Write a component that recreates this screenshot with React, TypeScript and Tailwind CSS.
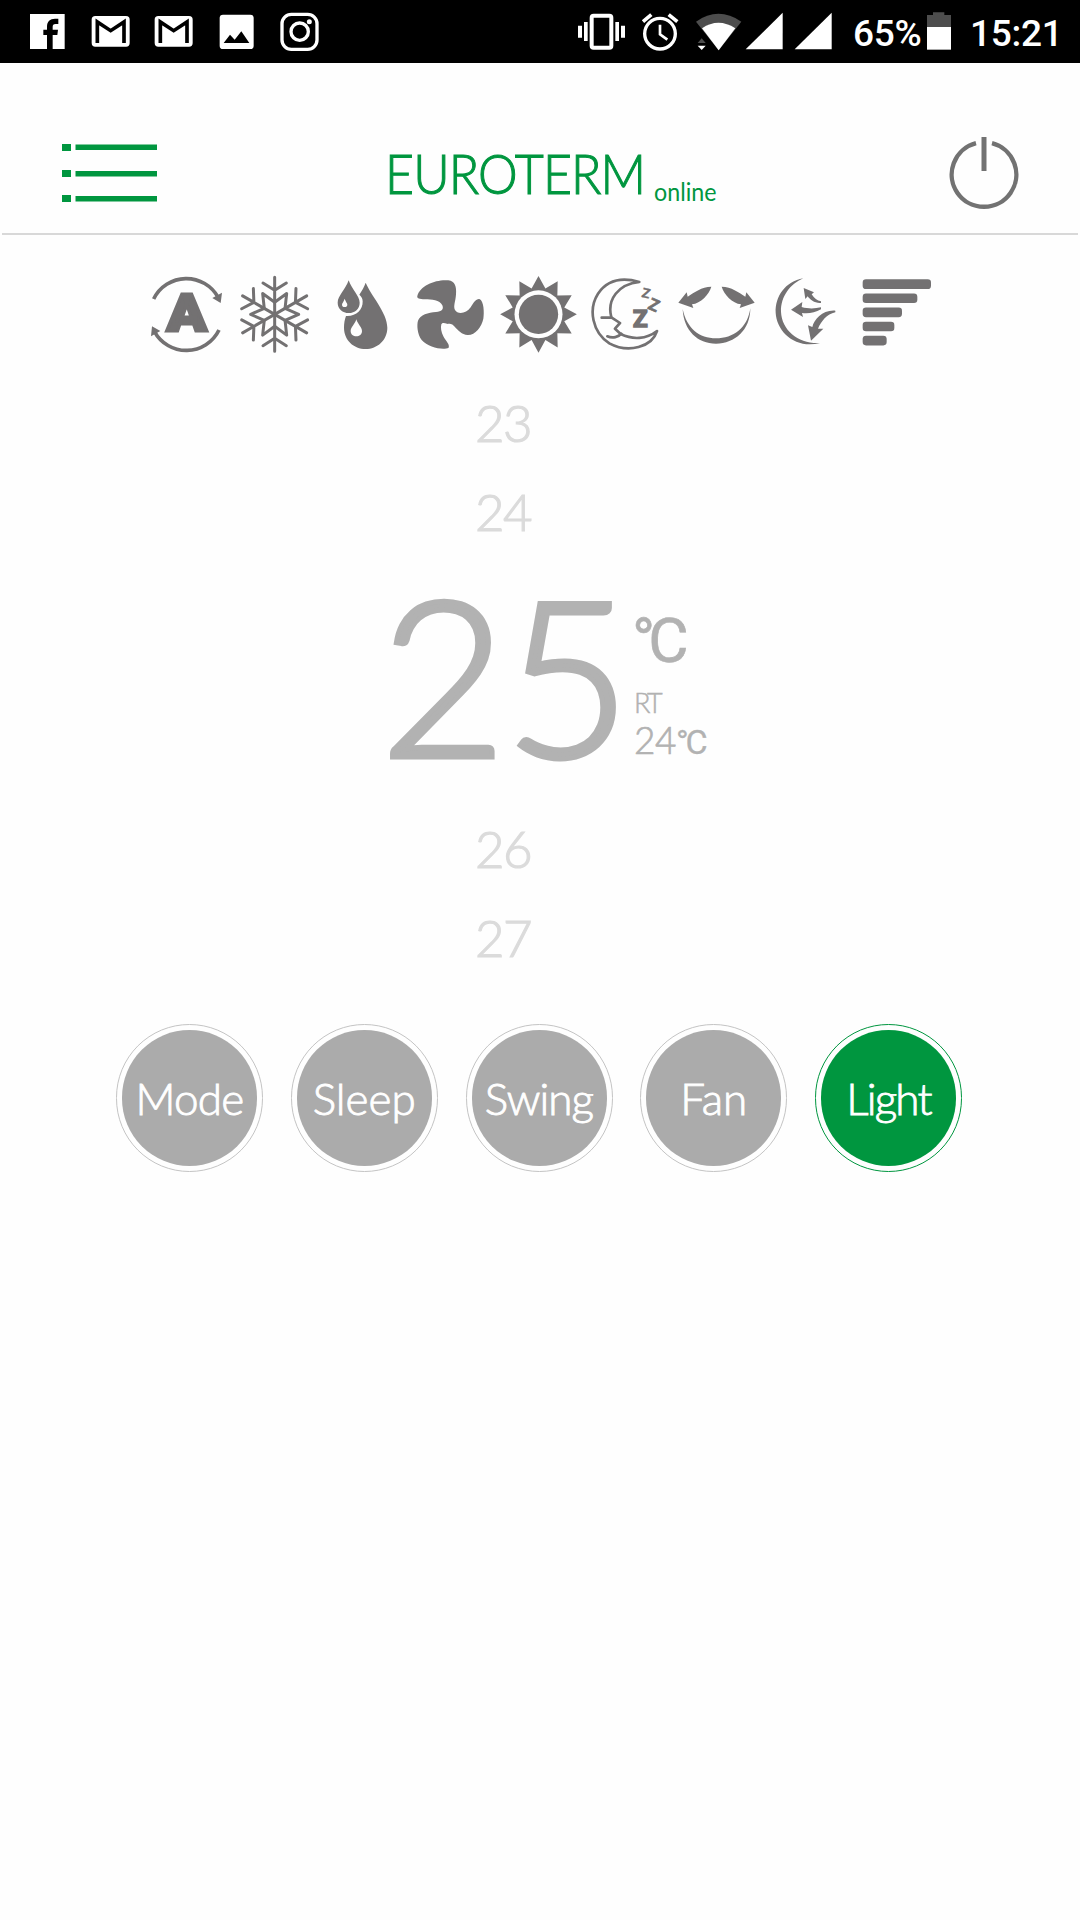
import { useState, type ReactNode } from "react";
import clsx from "clsx";

const MODES = [
  { label: "Mode", tracking: "tracking-[-0.7px]" },
  { label: "Sleep", tracking: "tracking-normal" },
  { label: "Swing", tracking: "tracking-[-0.9px]" },
  { label: "Fan", tracking: "tracking-normal" },
  { label: "Light", tracking: "tracking-[-1.8px]" },
];

/* ---------- Status bar ---------- */

function StatusIcon({
  x,
  width,
  className,
  children,
}: {
  x: number;
  width: number;
  className: string;
  children: ReactNode;
}) {
  return (
    <svg
      viewBox={`${x} 0 ${width} 189`}
      className={clsx("h-[63px] shrink-0", className)}
      fill="#fff"
    >
      {children}
    </svg>
  );
}

function GmailIcon() {
  return (
    <StatusIcon x={237} width={189} className="w-[63px]">
      <rect x="275" y="48" width="114" height="92" rx="11" />
      <path
        d="M292 129V66L332 92L372 66V129"
        fill="none"
        stroke="#000"
        strokeWidth="11"
      />
    </StatusIcon>
  );
}

function SignalIcon({ className }: { className: string }) {
  return (
    <StatusIcon x={552} width={144} className={className}>
      <path d="M557 148L668 38V148Z" />
    </StatusIcon>
  );
}

function StatusBar() {
  return (
    <div className="flex h-[63px] items-start bg-black pl-4 font-['Roboto',sans-serif] text-[37px] font-medium leading-[67px] text-white">
      <StatusIcon x={48} width={189} className="w-[63px]">
        <rect x="90" y="42" width="104" height="105" />
        <path
          d="M141 147V105H130V89H141V80C141 64 150 56 165 56H175V72H167C160 72 158 75 158 81V89H174L172 105H158V147Z"
          fill="#000"
        />
      </StatusIcon>
      <GmailIcon />
      <GmailIcon />
      <StatusIcon x={615} width={189} className="w-[63px]">
        <rect x="659" y="44" width="102" height="103" rx="10" />
        <path d="M671 129L690 104L704 119L724 94L748 129Z" fill="#000" />
      </StatusIcon>
      <StatusIcon x={804} width={189} className="w-[63px]">
        <g fill="none" stroke="#fff" strokeWidth="10">
          <rect x="846" y="43" width="105" height="105" rx="28" />
          <circle cx="899" cy="95" r="26" />
        </g>
        <circle cx="928" cy="65" r="7.5" />
      </StatusIcon>

      <StatusIcon x={30} width={186} className="ml-[239px] w-[62px]">
        <rect
          x="95"
          y="47"
          width="59"
          height="96"
          rx="6"
          fill="none"
          stroke="#fff"
          strokeWidth="12"
        />
        <path d="M54 77h12v36H54zM72 66h11v57H72zM166 66h11v57h-11zM183 77h12v36h-12z" />
      </StatusIcon>
      <StatusIcon x={216} width={174} className="w-[58px]">
        <g fill="none" stroke="#fff" strokeWidth="10">
          <circle cx="300" cy="101" r="46" />
          <path d="M300 74V103L322 119" strokeWidth="8" />
          <path d="M249 65L274 44M326 44L352 65" strokeWidth="11" />
        </g>
      </StatusIcon>
      <StatusIcon x={390} width={162} className="w-[54px]">
        <path d="M408 65Q475 18 544 65L476 151Z" fill="#4d4d4d" />
        <path d="M426 85Q475 52 526 85L476 151Z" />
        <path d="M413 129L425 115L437 129Z" fill="#4d4d4d" />
        <path d="M413 137H437L425 150Z" />
      </StatusIcon>
      <SignalIcon className="w-[48px]" />
      <SignalIcon className="ml-px w-[48px]" />
      <span className="ml-[12px] w-[72px] tracking-[-0.3px]">65%</span>
      <StatusIcon x={1095} width={84} className="w-[28px]">
        <path d="M1101 45H1119V37H1153V45H1173V82H1101Z" fill="#4d4d4d" />
        <path d="M1101 81H1173V149H1101Z" />
      </StatusIcon>
      <span className="ml-[17px] tracking-[-0.3px]">15:21</span>
    </div>
  );
}

/* ---------- Header ---------- */

function Logo() {
  return (
    <h1 className="flex w-[344px] items-baseline whitespace-nowrap pl-[5px] font-['Lato',sans-serif] leading-[75px] text-[#00963f]">
      <span className="w-[260px] shrink-0">
        <span className="inline-block origin-left scale-x-[0.895] text-[56px] font-light tracking-[-1px] [-webkit-text-stroke:1.1px_#00963f]">
          EUROTERM
        </span>
      </span>
      <span className="ml-[9px] inline-block origin-left translate-y-[7px] scale-x-[0.93] text-[25px]">
        online
      </span>
    </h1>
  );
}

function Header({ on, onPower }: { on: boolean; onPower: () => void }) {
  return (
    <header className="mx-[2px] flex h-[172px] items-start justify-between border-b-2 border-[#d8d8d8] pl-[58px] pr-[54px] pt-[72px]">
      <button type="button" aria-label="Menu">
        <svg viewBox="0 0 100 70" className="h-[70px] w-[100px]" fill="#00963f">
          <path d="M2 9h9v7H2zM2 35h9v7H2zM2 60h9v7H2z" />
          <path d="M15.5 9.5H97V15H15.5zM15.5 36H97v5.5H15.5zM15.5 61H97v5.5H15.5z" />
        </svg>
      </button>

      <Logo />

      <button type="button" aria-label={on ? "Turn off" : "Turn on"} onClick={onPower}>
        <svg
          viewBox="944 135 80 80"
          className="h-20 w-20"
          fill="none"
          stroke="#727272"
        >
          <path d="M976 143.2A32.3 32.3 0 1 0 992 143.2" strokeWidth="4.4" />
          <path d="M984 137V171" strokeWidth="5" />
        </svg>
      </button>
    </header>
  );
}

/* ---------- Feature icons ---------- */

function FeatureIcon({ x, children }: { x: number; children: ReactNode }) {
  return (
    <svg viewBox={`${x} 42 264 240`} className="h-20 w-[88px]" fill="#737172">
      {children}
    </svg>
  );
}

function polar(cx: number, cy: number, r: number, deg: number) {
  const a = (deg * Math.PI) / 180;
  return `${(cx + r * Math.cos(a)).toFixed(1)},${(cy + r * Math.sin(a)).toFixed(1)}`;
}

// star polygon, alternating between the tip and the valley radius
function star(cx: number, cy: number, tips: number, outer: number, inner: number) {
  return Array.from({ length: tips * 2 }, (_, i) =>
    polar(cx, cy, i % 2 ? inner : outer, (i * 180) / tips)
  ).join(" ");
}

function SwingArrow() {
  return (
    <path d="M154 80C124 80 104 97 83 110L80 97L55 128L100 144L96 133C122 130 147 104 154 80Z" />
  );
}

function FeatureIcons() {
  return (
    <div className="flex justify-center">
      {/* auto */}
      <FeatureIcon x={12}>
        <g fill="none" stroke="#737172" strokeWidth="11">
          <path d="M41 117A109 109 0 0 1 235 113" />
          <path d="M237 210A109 109 0 0 1 43 214" />
        </g>
        <path d="M242 129L217 114L246 98ZM36 199L61 213L33 229Z" />
        <text
          x="140.5"
          y="214"
          textAnchor="middle"
          textLength="120"
          lengthAdjust="spacingAndGlyphs"
          stroke="#737172"
          strokeWidth="9"
          className="font-['Roboto',sans-serif] text-[157px] font-black"
        >
          A
        </text>
      </FeatureIcon>

      {/* cool */}
      <FeatureIcon x={276}>
        <g fill="none" stroke="#737172" strokeWidth="9" strokeLinecap="round">
          {[0, 60, 120, 180, 240, 300].map((deg) => (
            <path
              key={deg}
              d="M404 163V52M369 69L404 91L439 69"
              transform={`rotate(${deg} 404 163)`}
            />
          ))}
          <polygon points={star(404, 163, 6, 72, 36)} strokeLinejoin="round" />
        </g>
      </FeatureIcon>

      {/* dry */}
      <FeatureIcon x={540}>
        <path d="M626 61C617 88 593 108 593 128C593 147 608 159 626 159C645 159 659 146 659 128C659 108 635 88 626 61Z" />
        <path d="M677 68C692 105 742 158 742 203C742 240 712 267 677 267C641 267 612 240 612 203C612 190 614 179 618 168C648 170 669 150 668 124C668 115 663 109 658 104C666 92 672 82 677 68Z" />
        <path
          d="M649 178C644 194 632 202 632 213C632 223 640 229 649 229C658 229 666 223 666 213C666 202 654 194 649 178ZM614 116C611 126 606 129 606 134C606 138 609 141 614 141C619 141 622 138 622 134C622 129 617 126 614 116Z"
          fill="#fefefe"
        />
      </FeatureIcon>

      {/* fan */}
      <FeatureIcon x={24}>
        <path d="M52 108C60 76 110 57 145 61C165 64 170 80 168 103C167 125 159 138 165 150C173 164 199 161 212 142C220 128 228 116 238 117C252 121 253 160 250 176C245 201 225 226 203 225C185 224 175 212 162 198C155 189 150 193 141 191C134 190 128 186 124 193C121 203 124 217 130 229C137 243 150 253 146 263C130 272 85 262 65 240C52 222 50 195 54 182C60 165 85 157 108 156C125 155 132 148 127 136C119 120 95 118 75 118C58 117 50 115 52 108Z" />
      </FeatureIcon>

      {/* heat */}
      <FeatureIcon x={288}>
        <polygon points={star(415.5, 163, 12, 115, 80)} />
        <circle cx="415.5" cy="163" r="72" fill="#fefefe" />
        <circle cx="415.5" cy="163" r="59" />
      </FeatureIcon>

      {/* sleep */}
      <FeatureIcon x={552}>
        <g
          fill="none"
          stroke="#737172"
          strokeWidth="8"
          strokeLinecap="round"
          strokeLinejoin="round"
        >
          <path d="M718 66C666 51 622 60 594 101C564 148 577 217 628 250C686 281 756 261 771 213C739 238 698 240 662 222L645 206L660 189L634 172C620 119 655 72 718 66Z" />
          <path d="M605 173H634M622 229C638 236 656 231 664 221" />
        </g>
        <g
          className="font-['Roboto',sans-serif] font-bold"
          stroke="#737172"
          strokeWidth="2"
        >
          <text x="699" y="202" fontSize="72" strokeWidth="5">
            Z
          </text>
          <text x="741" y="145" fontSize="50" transform="rotate(24 741 145)">
            Z
          </text>
          <text x="723" y="110" fontSize="40" strokeWidth="1" transform="rotate(14 723 110)">
            Z
          </text>
        </g>
      </FeatureIcon>

      {/* horizontal swing */}
      <FeatureIcon x={36}>
        <path d="M68 147C71 212 113 251 168 251C225 251 271 210 271 145C262 205 220 235 168 235C118 235 80 205 68 147Z" />
        <SwingArrow />
        <g transform="translate(339 0) scale(-1 1)">
          <SwingArrow />
        </g>
      </FeatureIcon>

      {/* vertical swing */}
      <FeatureIcon x={300}>
        <path d="M430 55C375 65 345 110 347 158C350 215 406 268 480 249C418 253 365 212 363 155C362 110 390 72 430 55Z" />
        <path d="M431 84L462 97L455 103C463 115 471 122 483 124V129C465 131 450 119 443 109L436 117Z" />
        <path d="M393 149L427 126L425 141C445 147 465 146 483 142V148C465 158 445 162 426 159L429 171Z" />
        <path d="M453 242L444 196L457 201C463 178 488 149 526 152V157C500 162 484 184 474 206L490 206Z" />
      </FeatureIcon>

      {/* fan speed */}
      <FeatureIcon x={564}>
        {[205, 164, 118, 95, 72].map((w, i) => (
          <rect key={w} x="608" y={58 + i * 42.3} width={w} height="29" rx="10" />
        ))}
      </FeatureIcon>
    </div>
  );
}

/* ---------- Temperature ---------- */

function Step({ value, onSelect }: { value: number; onSelect: (v: number) => void }) {
  return (
    <button
      type="button"
      onClick={() => onSelect(value)}
      className="block h-[89px] pl-[475px] text-[51px] font-light leading-[90px] tracking-[-1.5px] text-[#dbdbdb] [-webkit-text-stroke:1.2px_#dbdbdb]"
    >
      {value}
    </button>
  );
}

function TemperaturePicker() {
  const [temp, setTemp] = useState(25);

  return (
    <section className="mt-[24px] font-['Lato',sans-serif]">
      <Step value={temp - 2} onSelect={setTemp} />
      <Step value={temp - 1} onSelect={setTemp} />
      <div className="flex h-[248px] text-[#b2b2b2]">
        <span className="ml-[380px] w-[252px] text-[218px] font-light leading-[233px] tracking-[-2px] [-webkit-text-stroke:5px_#b2b2b2]">
          {temp}
        </span>
        <div className="flex flex-col pt-[53px]">
          <span className="font-['Roboto',sans-serif] text-[62px] leading-[64px] tracking-[-7px] [-webkit-text-stroke:0.6px_#b2b2b2]">
            °C
          </span>
          <span className="ml-[2px] mt-[16px] text-[27px] font-light leading-[28px] tracking-[-2.5px] [-webkit-text-stroke:0.5px_#b2b2b2]">
            RT
          </span>
          <span className="ml-[2px] mt-[4px] text-[37px] font-light leading-[37px] tracking-[-0.5px] [-webkit-text-stroke:0.7px_#b2b2b2]">
            24
            <span className="font-['Roboto',sans-serif] text-[34px] font-normal tracking-[-3px] [-webkit-text-stroke:0.3px_#b2b2b2]">
              °C
            </span>
          </span>
        </div>
      </div>
      <Step value={temp + 1} onSelect={setTemp} />
      <Step value={temp + 2} onSelect={setTemp} />
    </section>
  );
}

/* ---------- Mode buttons ---------- */

function ModeButton({
  label,
  tracking,
  active,
  onClick,
}: {
  label: string;
  tracking: string;
  active: boolean;
  onClick: () => void;
}) {
  return (
    <button
      type="button"
      onClick={onClick}
      className={clsx(
        "h-[148px] w-[147px] rounded-full border p-[5px]",
        active ? "border-[#00963f]" : "border-[#c4c4c4]"
      )}
    >
      <span
        className={clsx(
          "flex h-full w-full items-center justify-center rounded-full text-[44px] text-white [-webkit-text-stroke:0.9px_#fff]",
          tracking,
          active ? "bg-[#00963f]" : "bg-[#ababab]"
        )}
      >
        {label}
      </span>
    </button>
  );
}

export default function App() {
  const [active, setActive] = useState("Light");
  const [on, setOn] = useState(true);

  return (
    <div className="h-[1920px] w-[1080px] overflow-hidden bg-[#fefefe]">
      <StatusBar />
      <Header on={on} onPower={() => setOn(!on)} />
      <main className="pt-[39px]">
        <FeatureIcons />
        <TemperaturePicker />
        <div className="mt-[42px] flex justify-between pl-[116px] pr-[118px] font-['Lato',sans-serif] font-light">
          {MODES.map((m) => (
            <ModeButton
              key={m.label}
              label={m.label}
              tracking={m.tracking}
              active={m.label === active}
              onClick={() => setActive(m.label)}
            />
          ))}
        </div>
      </main>
    </div>
  );
}
